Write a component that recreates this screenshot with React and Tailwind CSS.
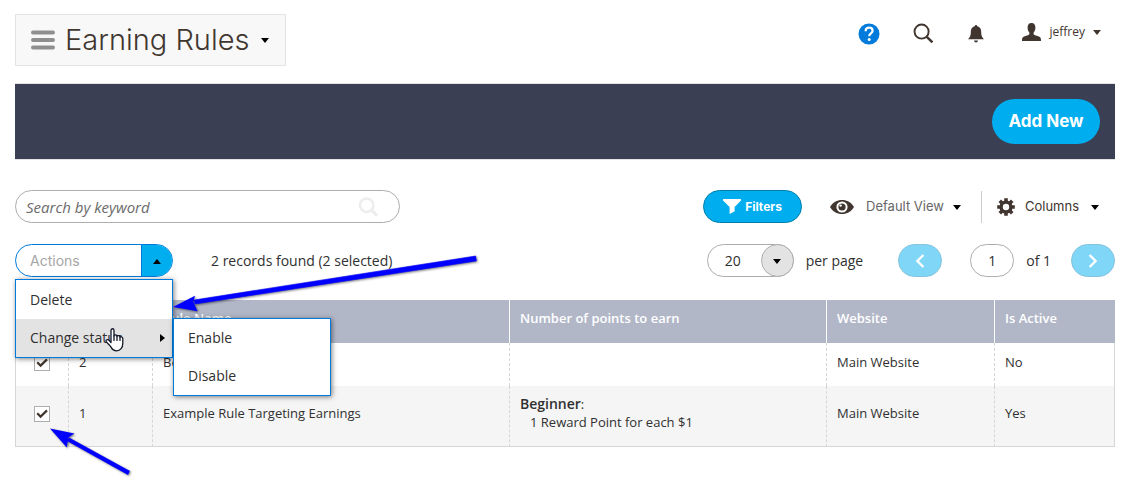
import { useState } from 'react';

const rows = [
  { id: 2, name: 'Best', points: null, website: 'Main Website', active: 'No' },
  {
    id: 1,
    name: 'Example Rule Targeting Earnings',
    points: { level: 'Beginner', text: '1 Reward Point for each $1' },
    website: 'Main Website',
    active: 'Yes',
  },
];

function Caret({ className = '', dir = 'down' }) {
  const points = {
    down: '0,2 8,2 4,7',
    up: '0,7 8,7 4,2',
    right: '2,0 7,4 2,8',
  };
  return (
    <svg className={`h-2 w-2 shrink-0 ${className}`} viewBox="0 0 8 8" fill="currentColor" aria-hidden="true">
      <polygon points={points[dir]} />
    </svg>
  );
}

function SearchIcon({ className, strokeWidth = 2 }) {
  return (
    <svg className={className} viewBox="0 0 22 22" fill="none" stroke="currentColor" strokeWidth={strokeWidth} aria-hidden="true">
      <circle cx="9" cy="9" r="7.4" />
      <path d="M14.2 14.2L20.4 20.4" strokeWidth={strokeWidth + 0.6} />
    </svg>
  );
}

function GearIcon() {
  const teeth = [0, 45, 90, 135];
  return (
    <svg className="h-[18px] w-[18px]" viewBox="0 0 18 18" fill="none" stroke="currentColor" aria-hidden="true">
      <circle cx="9" cy="9" r="4.9" strokeWidth="3.4" />
      {teeth.map((angle) => (
        <path key={angle} d="M9 0.2V4M9 14V17.8" strokeWidth="3.6" transform={`rotate(${angle} 9 9)`} />
      ))}
    </svg>
  );
}

function PageHeader() {
  return (
    <header className="flex items-start justify-between pt-[14px]">
      <button className="flex h-[52px] items-center border border-[#e3e3e3] bg-[#f8f8f8] pr-4 pl-[15px] text-[#41362f]">
        <svg className="h-5 w-6 text-[#8f8f8f]" viewBox="0 0 24 20" stroke="currentColor" strokeWidth="4" strokeLinecap="round" aria-hidden="true">
          <path d="M2 2.5H22M2 10H22M2 17.5H22" />
        </svg>
        <h1 className="ml-[10px] font-['Inter',sans-serif] text-[29px] leading-9 font-light">Earning Rules</h1>
        <Caret className="ml-3 text-black" />
      </button>
      <div className="flex items-center pt-2 pr-[14px] text-[#41362f]">
        <button aria-label="Help">
          <svg className="h-[22px] w-[22px]" viewBox="0 0 22 22" fill="none" aria-hidden="true">
            <circle cx="11" cy="11" r="10.5" fill="#007bdb" />
            <path d="M7.6 8.2C7.6 6 9 4.7 11.1 4.7C13.2 4.7 14.6 6 14.6 7.8C14.6 10.4 11.2 10.5 11.2 13.2" stroke="#fff" strokeWidth="2.2" />
            <circle cx="11.2" cy="16.6" r="1.5" fill="#fff" />
          </svg>
        </button>
        <button aria-label="Search" className="ml-[33px]">
          <SearchIcon className="h-[21px] w-[21px]" />
        </button>
        <button aria-label="Notifications" className="ml-[34px]">
          <svg className="h-[18px] w-4" viewBox="0 0 16 18" fill="currentColor" aria-hidden="true">
            <path d="M8 0C8.8 0 9.3 .6 9.3 1.3C12 1.9 13.2 4 13.2 6.8C13.2 10.8 14 12.2 16 14.2H0C2 12.2 2.8 10.8 2.8 6.8C2.8 4 4 1.9 6.7 1.3C6.7 .6 7.2 0 8 0Z" />
            <path d="M6 15.6H10C9.8 17 9 17.4 8 17.4S6.2 17 6 15.6Z" />
          </svg>
        </button>
        <button className="ml-[38px] flex items-center pb-[3px] font-['Open_Sans',sans-serif] text-xs leading-5">
          <svg className="h-[18px] w-[19px]" viewBox="0 0 19 18" fill="currentColor" aria-hidden="true">
            <path d="M9.5 0C12.2 0 13.4 1.8 13.4 4.6C13.4 7 12.6 8.4 11.7 9.6C11.4 10.2 11.5 11.4 12.1 11.8C14 13 17.6 13.3 18.4 14.6C18.9 15.4 19 16.8 19 18H0C0 16.8 .1 15.4 .6 14.6C1.4 13.3 5 13 6.9 11.8C7.5 11.4 7.6 10.2 7.3 9.6C6.4 8.4 5.6 7 5.6 4.6C5.6 1.8 6.8 0 9.5 0Z" />
          </svg>
          <span className="ml-[9px]">jeffrey</span>
          <Caret className="ml-2" />
        </button>
      </div>
    </header>
  );
}

function ActionsMenu() {
  return (
    <div className="relative w-[158px]">
      <button aria-haspopup="menu" aria-expanded="true" className="flex h-[33px] w-full overflow-hidden rounded-full border border-[#007bdb] bg-white text-left">
        <span className="flex-1 pl-[14px] font-['Inter',sans-serif] text-sm leading-[31px] text-[#a6a6a6]">Actions</span>
        <span className="flex h-full w-[31px] items-center justify-center border-l border-[#007bdb] bg-[#00aeef]">
          <Caret dir="up" className="text-black" />
        </span>
      </button>
      <ul role="menu" className="absolute top-[35px] left-0 z-10 w-full border border-[#007bdb] bg-white shadow-[1px_1px_5px_rgba(0,0,0,0.5)]">
        <li role="none">
          <button role="menuitem" className="h-[39px] w-full px-[14px] text-left">Delete</button>
        </li>
        <li role="none" className="relative">
          <button role="menuitem" aria-haspopup="menu" className="flex h-[38px] w-full items-center justify-between bg-[#e3e3e3] pr-[6px] pl-[14px]">
            Change status
            <Caret dir="right" className="text-black" />
          </button>
          <ul role="menu" className="absolute -top-px left-full ml-px w-[158px] border border-[#007bdb] bg-white shadow-[1px_1px_5px_rgba(0,0,0,0.5)]">
            <li role="none">
              <button role="menuitem" className="h-[38px] w-full px-[14px] text-left">Enable</button>
            </li>
            <li role="none">
              <button role="menuitem" className="h-[38px] w-full px-[14px] text-left">Disable</button>
            </li>
          </ul>
          <HandCursor />
        </li>
      </ul>
    </div>
  );
}

function HandCursor() {
  return (
    <svg className="pointer-events-none absolute top-[9px] left-[89px] h-6 w-[19px]" viewBox="0 0 19 24" fill="#fff" stroke="#111827" strokeWidth="1.3" strokeLinejoin="round" strokeLinecap="round" aria-hidden="true">
      <path d="M6 14.5V2.4C6 .2 9 .2 9 2.4V8C9.2 6.4 11.9 6.6 12 8.4C12.3 7 14.8 7.4 15 9.2C15.4 8.2 17.8 8.6 17.8 10.6V15.5C17.8 19.4 15.4 22.8 11.6 22.8C8.6 22.8 7.2 21.4 6.2 19.4C5 17 2.6 15.6 1.2 13.6C.4 12 2.6 10.8 4 12.2Z" />
      <path d="M9 8V12.4M12 8.6V12.4M15 9.4V12.4" />
    </svg>
  );
}

function Toolbar() {
  return (
    <div className="mt-[30px] flex items-center justify-between">
      <div className="relative w-[385px]">
        <input
          type="text"
          aria-label="Search by keyword"
          placeholder="Search by keyword"
          className="block h-[33px] w-full rounded-full border border-[#adadad] pr-12 pl-[10px] text-[15px] placeholder:text-[#6b6b6b] placeholder:italic"
        />
        <button aria-label="Search" className="absolute top-[7px] right-[21px] text-[#ededed]">
          <SearchIcon className="h-5 w-[21px]" strokeWidth={2.8} />
        </button>
      </div>
      <div className="flex items-center pr-4 font-['Inter',sans-serif] text-[13px] text-[#41362f]">
        <button className="flex h-[33px] w-[99px] items-center justify-center gap-1 rounded-full border border-[#007ea8] bg-[#00aeef] text-xs font-bold text-white">
          <svg className="h-[15px] w-[18px]" viewBox="0 0 18 15" fill="currentColor" aria-hidden="true">
            <path d="M0 0H18V1.6L11.6 8V12.2L6.6 15V8L0 1.6Z" />
          </svg>
          Filters
        </button>
        <button className="ml-7 flex items-center">
          <svg className="h-[14px] w-6" viewBox="0 0 24 14" aria-hidden="true">
            <path d="M0 7C2.6 2.6 7 0 12 0S21.4 2.6 24 7C21.4 11.4 17 14 12 14S2.6 11.4 0 7Z" fill="currentColor" />
            <circle cx="12" cy="7" r="4.6" fill="none" stroke="#fff" strokeWidth="2" />
            <circle cx="10.6" cy="5.6" r="1.2" fill="#fff" />
          </svg>
          <span className="ml-3 text-[#666]">Default View</span>
          <Caret className="ml-[9px] text-black" />
        </button>
        <button className="ml-5 flex h-8 items-center border-l border-[#ccc] pl-[15px]">
          <GearIcon />
          <span className="ml-[10px]">Columns</span>
          <Caret className="ml-3 text-black" />
        </button>
      </div>
    </div>
  );
}

function PageArrow({ label, d }) {
  return (
    <button aria-label={label} className="flex h-[33px] w-11 items-center justify-center rounded-full border border-[#84c3dd] bg-[#80d6f7]">
      <svg className="h-[14px] w-[10px]" viewBox="0 0 10 14" fill="none" stroke="#fff" strokeWidth="2.4" aria-hidden="true">
        <path d={d} />
      </svg>
    </button>
  );
}

function Pager() {
  return (
    <div className="flex items-center">
      <label className="flex items-center">
        <span className="relative">
          <select className="block h-[33px] w-[87px] appearance-none rounded-full border border-[#adadad] bg-white pl-[17px]" defaultValue="20">
            <option>20</option>
            <option>50</option>
          </select>
          <span className="pointer-events-none absolute top-0 right-0 flex h-[33px] w-[33px] items-center justify-center rounded-full border border-[#adadad] bg-[#e3e3e3]">
            <Caret className="text-black" />
          </span>
        </span>
        <span className="ml-3">per page</span>
      </label>
      <div className="ml-[35px] flex items-center">
        <PageArrow label="Previous page" d="M8.4 1L2.4 7L8.4 13" />
        <label className="ml-7 flex items-center">
          <input type="text" aria-label="Page" defaultValue="1" className="h-[33px] w-11 rounded-full border border-[#adadad] text-center" />
          <span className="ml-3">of 1</span>
        </label>
        <span className="ml-5 flex">
          <PageArrow label="Next page" d="M1.6 1L7.6 7L1.6 13" />
        </span>
      </div>
    </div>
  );
}

function RulesTable() {
  const [selected, setSelected] = useState([1, 2]);

  const toggle = (id) =>
    setSelected((ids) => (ids.includes(id) ? ids.filter((i) => i !== id) : [...ids, id]));

  const head = 'border-l border-white px-[10px] pb-2 text-left font-semibold';
  const cell = 'border-l border-dashed border-[#d6d6d6] px-[10px] pb-[6px]';

  return (
    <table className="mt-[23px] w-full table-fixed border-separate border-spacing-0 text-[13px] leading-[18px]">
      <colgroup>
        <col className="w-[53px]" />
        <col className="w-[84px]" />
        <col />
        <col className="w-[317px]" />
        <col className="w-[168px]" />
        <col className="w-[121px]" />
      </colgroup>
      <thead>
        <tr className="h-[43px] bg-[#b2b7c8] text-white">
          <th aria-label="Select" />
          <th className={head}>ID</th>
          <th className={head}>Rule Name</th>
          <th className={head}>Number of points to earn</th>
          <th className={head}>Website</th>
          <th className={head}>Is Active</th>
        </tr>
      </thead>
      <tbody>
        {rows.map((row) => (
          <tr key={row.id} className="h-[43px] even:h-[61px] even:bg-[#f5f5f5] [&:last-child>td]:border-b [&:last-child>td]:border-b-[#d6d6d6] [&:last-child>td]:[border-bottom-style:solid]">
            <td className="border-l border-[#d6d6d6] pb-1">
              <span className="relative mx-auto block h-4 w-4">
                <input
                  type="checkbox"
                  aria-label={`Select rule ${row.id}`}
                  checked={selected.includes(row.id)}
                  onChange={() => toggle(row.id)}
                  className="peer block h-4 w-4 appearance-none border border-[#adadad] bg-white"
                />
                <svg className="pointer-events-none absolute top-0 left-0 hidden h-4 w-4 peer-checked:block" viewBox="0 0 16 16" fill="none" stroke="#41362f" strokeWidth="2.2" aria-hidden="true">
                  <path d="M3.2 7.2L6.6 10.6L13 4.4" />
                </svg>
              </span>
            </td>
            <td className={cell}>{row.id}</td>
            <td className={cell}>{row.name}</td>
            <td className={cell}>
              {row.points && (
                <>
                  <div><strong className="text-sm leading-[18px] font-semibold">{row.points.level}</strong>:</div>
                  <div className="pl-[10px]">{row.points.text}</div>
                </>
              )}
            </td>
            <td className={cell}>{row.website}</td>
            <td className={`${cell} border-r [border-right-style:solid]`}>{row.active}</td>
          </tr>
        ))}
      </tbody>
    </table>
  );
}

function Callouts() {
  return (
    <>
      <svg className="pointer-events-none absolute top-[250px] left-[170px] z-20 h-16 w-[312px] drop-shadow-[1px_1px_1px_rgba(0,0,0,0.5)]" viewBox="0 0 312 64" fill="#0000fe" aria-hidden="true">
        <path d="M305.7 6L306.3 11L25 54L24.2 50Z" stroke="#0000fe" strokeWidth="0.6" />
        <path d="M3 57L25 45.8L23.4 52L27.6 61.2Z" />
      </svg>
      <svg className="pointer-events-none absolute top-[424px] left-[46px] z-20 h-[54px] w-[90px] drop-shadow-[1px_1px_1px_rgba(0,0,0,0.5)]" viewBox="0 0 90 54" fill="#0000fe" aria-hidden="true">
        <path d="M84 47L82 51L21 17L23 13.4Z" />
        <path d="M4 4.4L28.4 9.4L22.4 13.6L20.8 23.4Z" />
      </svg>
    </>
  );
}

export default function App() {
  return (
    <div className="relative bg-white pr-[13px] pb-10 pl-[15px] font-['Open_Sans',sans-serif] text-sm text-[#303030]">
      <PageHeader />
      <main>
        <div className="mt-[17px] flex justify-end border-y border-[#e3e3e3] bg-[#3b3f54] py-[15px] pr-[15px]">
          <button className="h-[45px] w-[108px] rounded-full bg-[#00aeef] font-['Inter',sans-serif] text-[17px] font-bold text-white">
            Add New
          </button>
        </div>
        <Toolbar />
        <div className="mt-[21px] flex items-center justify-between">
          <div className="flex items-center">
            <ActionsMenu />
            <span className="ml-[38px]">2 records found (2 selected)</span>
          </div>
          <Pager />
        </div>
        <RulesTable />
      </main>
      <Callouts />
    </div>
  );
}
